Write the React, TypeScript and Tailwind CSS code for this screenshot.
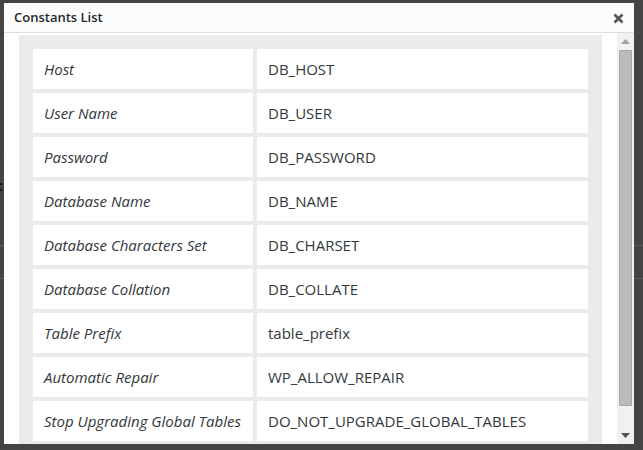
import React from 'react';

const rows: [string, string][] = [
  ['Host', 'DB_HOST'],
  ['User Name', 'DB_USER'],
  ['Password', 'DB_PASSWORD'],
  ['Database Name', 'DB_NAME'],
  ['Database Characters Set', 'DB_CHARSET'],
  ['Database Collation', 'DB_COLLATE'],
  ['Table Prefix', 'table_prefix'],
  ['Automatic Repair', 'WP_ALLOW_REPAIR'],
  ['Stop Upgrading Global Tables', 'DO_NOT_UPGRADE_GLOBAL_TABLES'],
];

function Scrollbar() {
  return (
    <div className="w-[17px] shrink-0 bg-[#f1f1f1] flex flex-col items-center">
      <div className="h-[17px] flex items-center justify-center">
        <svg width="9" height="5" viewBox="0 0 9 5">
          <polygon points="4.5,0 9,5 0,5" fill="#a3a3a3" />
        </svg>
      </div>
      <div className="w-[13px] h-[356px] bg-[#bcbcbc] border border-[#a8a8a8]" />
      <div className="flex-1" />
      <div className="h-[17px] flex items-center justify-center">
        <svg width="9" height="5" viewBox="0 0 9 5">
          <polygon points="0,0 9,0 4.5,5" fill="#505050" />
        </svg>
      </div>
    </div>
  );
}

export default function App() {
  return (
    <div
      className="relative w-[643px] h-[450px] bg-[#444444] overflow-hidden"
      style={{ fontFamily: '"Open Sans", "Liberation Sans", sans-serif' }}
    >
      {/* page behind the overlay */}
      <div className="text-[15px] font-bold text-[#111] leading-none">
        <div className="pt-[66px] -ml-[4px]">i</div>
        <div className="pt-[66px] -ml-[4px]">i</div>
        <div className="pt-[16px] -ml-[5px]">c</div>
      </div>
      <div className="mt-[52px] h-px bg-[#5a5a5a]" />
      <div className="mt-[32px] h-px bg-[#5a5a5a]" />

      {/* modal */}
      <div className="absolute left-[4px] top-[3px] w-[630px] h-[441px] bg-white flex flex-col">
        <div className="h-[30px] shrink-0 bg-[#fcfcfc] border-b border-[#dddddd] flex items-center justify-between pl-[10px] pr-[10px]">
          <span className="text-[13px] font-semibold text-[#23282d]">Constants List</span>
          <svg width="11" height="11" viewBox="0 0 11 11" className="mt-[1px]">
            <path d="M1.5 1.5 L9.5 9.5 M9.5 1.5 L1.5 9.5" stroke="#555" strokeWidth="2.6" strokeLinecap="butt" />
          </svg>
        </div>
        <div className="flex-1 min-h-0 flex">
          <div className="flex-1 min-w-0 overflow-hidden pl-[15px] pr-[15px] pt-[2px]">
            <div className="bg-[#ebebeb] p-[10px]">
              <table className="border-separate border-spacing-[4px] w-full">
                <tbody>
                  {rows.map(([label, value]) => (
                    <tr key={label}>
                      <td className="bg-white h-[40px] w-[220px] pl-[11px] italic text-[15px] text-[#32373c]">
                        {label}
                      </td>
                      <td className="bg-white h-[40px] pl-[11px] text-[15px] text-[#32373c]">{value}</td>
                    </tr>
                  ))}
                </tbody>
              </table>
            </div>
          </div>
          <Scrollbar />
        </div>
      </div>
    </div>
  );
}
